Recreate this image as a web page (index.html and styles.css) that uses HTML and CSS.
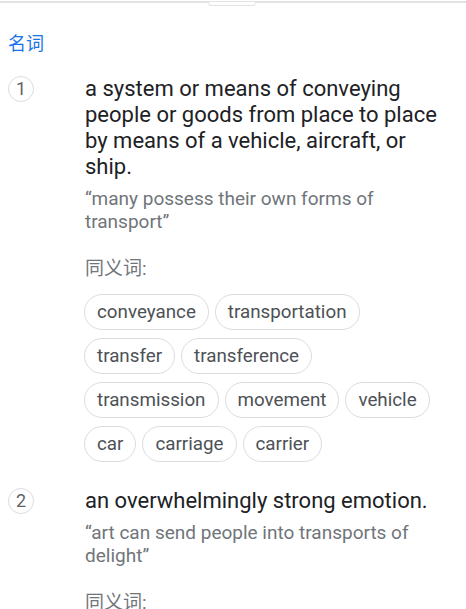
FILE: index.html
```html
<!DOCTYPE html>
<html lang="zh">
<head>
<meta charset="utf-8">
<link rel="stylesheet" href="styles.css">
</head>
<body>
<div class="topbar"><div class="handle"></div></div>
<div class="content">
  <div class="pos">名词</div>
  <div class="sense">
    <div class="num">1</div>
    <div class="body">
      <div class="def">a system or means of conveying people or goods from place to place by means of a vehicle, aircraft, or ship.</div>
      <div class="ex">“many possess their own forms of transport”</div>
      <div class="syn-label">同义词:</div>
      <div class="chips">
        <span class="chip">conveyance</span>
        <span class="chip">transportation</span>
        <span class="chip">transfer</span>
        <span class="chip">transference</span>
        <span class="chip">transmission</span>
        <span class="chip">movement</span>
        <span class="chip">vehicle</span>
        <span class="chip">car</span>
        <span class="chip">carriage</span>
        <span class="chip">carrier</span>
      </div>
    </div>
  </div>
  <div class="sense">
    <div class="num">2</div>
    <div class="body">
      <div class="def">an overwhelmingly strong emotion.</div>
      <div class="ex">“art can send people into transports of delight”</div>
      <div class="syn-label">同义词:</div>
    </div>
  </div>
</div>
</body>
</html>
```
FILE: styles.css
```css
html, body {
  margin: 0;
  padding: 0;
  background: #fff;
  font-family: Roboto, "Noto Sans CJK SC", sans-serif;
  overflow: hidden;
}
.topbar {
  height: 1px;
  border-bottom: 2px solid #e3e3e3;
  display: flex;
  justify-content: center;
}
.handle {
  width: 46px;
  height: 3px;
  margin-top: 2px;
  margin-left: -2px;
  border: 1px solid #e3e3e3;
  border-top: none;
  border-radius: 0 0 8px 8px;
  background: #fff;
}
.content {
  padding: 29px 20px 0 8px;
}
.pos {
  color: #1a73e8;
  font-size: 18px;
  line-height: 24px;
  margin-bottom: 20px;
}
.sense {
  display: flex;
  align-items: flex-start;
  margin-bottom: 26px;
}
.num {
  flex: none;
  width: 24px;
  height: 24px;
  border: 1px solid #dadce0;
  border-radius: 50%;
  color: #5f6368;
  font-size: 18px;
  line-height: 24px;
  text-align: center;
}
.body {
  margin-left: 51px;
  flex: 1;
}
.def {
  color: #202124;
  font-size: 22px;
  line-height: 26px;
}
.ex {
  color: #70757a;
  font-size: 19px;
  line-height: 23px;
  margin-top: 7px;
}
.syn-label {
  color: #70757a;
  font-size: 19px;
  line-height: 24px;
  margin-top: 24px;
  margin-bottom: 13px;
}
.chips {
  display: flex;
  flex-wrap: wrap;
  gap: 8px 6px;
  margin-left: -1px;
}
.chip {
  border: 1px solid #dadce0;
  border-radius: 18px;
  height: 34px;
  line-height: 34px;
  padding: 0 12px;
  color: #4d5156;
  font-size: 18.8px;
}
```
